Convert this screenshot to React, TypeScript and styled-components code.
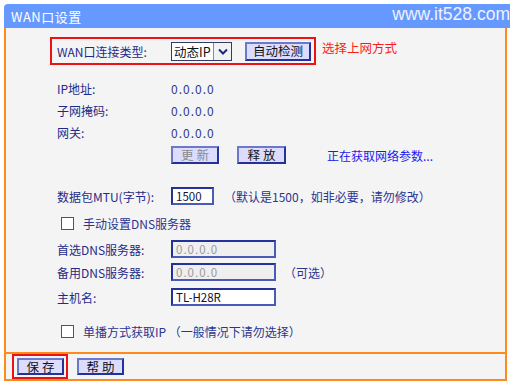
import React from "react";
import styled, { createGlobalStyle } from "styled-components";

const Global = createGlobalStyle`
  body {
    margin: 0;
    background: #ffffff;
    font-family: "Noto Sans CJK SC", "Liberation Sans", sans-serif;
    font-size: 12px;
  }
`;

const Panel = styled.div`
  margin: 4px 0 0 4px;
  width: 506px;
`;

const TitleBar = styled.div`
  height: 24px;
  background: #6699ff;
  border-top-left-radius: 4px;
  display: flex;
  align-items: center;
  justify-content: space-between;
  padding-left: 7px;
  color: #ffffff;
`;

const Title = styled.span`
  font-size: 13px;
  letter-spacing: 0.5px;
`;

const Site = styled.span`
  font-family: "Liberation Sans", sans-serif;
  font-size: 17.5px;
  color: #eef2ff;
  margin-top: -3px;
`;

const Body = styled.div`
  width: 503px;
  box-sizing: border-box;
  background: #f4f4f4;
  border: 2px solid #ff8a1c;
  border-top: none;
  display: flex;
  flex-direction: column;
`;

const RedBox = styled.div<{ $ml: number; $mt?: number }>`
  border: 2px solid #ee1111;
  box-sizing: border-box;
  margin-left: ${(p) => p.$ml}px;
  margin-top: ${(p) => p.$mt ?? 0}px;
  display: flex;
  align-items: center;
`;

const TypeBox = styled(RedBox)`
  width: 266px;
  height: 28px;
  padding-left: 5px;
`;

const Row = styled.div<{ $mt?: number; $h?: number }>`
  display: flex;
  align-items: center;
  height: ${(p) => p.$h ?? 22}px;
  margin-top: ${(p) => p.$mt ?? 0}px;
  padding-left: 51px;
`;

const Label = styled.span`
  width: 114px;
  flex-shrink: 0;
  color: #1f2b88;
`;

const Value = styled.span`
  color: #2f3a90;
  letter-spacing: 1px;
`;

const Note = styled.span<{ $color?: string; $ml?: number }>`
  color: ${(p) => p.$color ?? "#2a3590"};
  margin-left: ${(p) => p.$ml ?? 0}px;
  white-space: nowrap;
`;

const Select = styled.div`
  width: 61px;
  height: 19px;
  box-sizing: border-box;
  border: 1px solid #333a66;
  background: #ffffff;
  display: flex;
  align-items: center;
  justify-content: space-between;
  padding-left: 2px;
  color: #111111;
  font-size: 12.5px;
`;

const SelectArrow = styled.span`
  width: 18px;
  height: 17px;
  box-sizing: border-box;
  border-left: 1px solid #8a8a8a;
  background: #f2f2f2;
  display: flex;
  align-items: center;
  justify-content: center;
`;

const Button = styled.button<{ $w: number; $disabled?: boolean }>`
  width: ${(p) => p.$w}px;
  height: 18px;
  box-sizing: border-box;
  padding: 0;
  background: #dcdcff;
  border: 2px solid;
  border-color: #6a79c9 #23329a #23329a #6a79c9;
  color: ${(p) => (p.$disabled ? "#8a8a8a" : "#111111")};
  font-family: inherit;
  font-size: 12.5px;
  line-height: 14px;
  letter-spacing: 3px;
  text-indent: 3px;
`;

const Input = styled.div<{ $w: number; $disabled?: boolean }>`
  width: ${(p) => p.$w}px;
  height: 18px;
  box-sizing: border-box;
  border: 2px solid;
  border-color: #23329a #4a5ab8 #4a5ab8 #23329a;
  background: ${(p) => (p.$disabled ? "#efefef" : "#ffffff")};
  color: ${(p) => (p.$disabled ? "#9a9a9a" : "#111133")};
  padding-left: 3px;
  display: flex;
  align-items: center;
  font-size: 11.5px;
  letter-spacing: ${(p) => (p.$disabled ? "1px" : "0")};
`;

const Check = styled.span`
  width: 13px;
  height: 13px;
  box-sizing: border-box;
  border: 1px solid #555555;
  background: #ffffff;
  margin-left: 4px;
  margin-right: 9px;
  flex-shrink: 0;
`;

const Footer = styled.div`
  margin-top: 10px;
  border-top: 2px solid #ff8a1c;
  height: 25px;
  display: flex;
  align-items: center;
  gap: 9px;
`;

const SaveBox = styled(RedBox)`
  height: 25px;
  padding: 0 2px 0 3px;
`;

export default function App() {
  return (
    <>
      <Global />
      <Panel>
        <TitleBar>
          <Title>WAN口设置</Title>
          <Site>www.it528.com</Site>
        </TitleBar>
        <Body>
          <Row $mt={9} $h={28} style={{ paddingLeft: 44 }}>
            <TypeBox $ml={0}>
              <Label style={{ width: 114 }}>WAN口连接类型:</Label>
              <Select>
                动态IP
                <SelectArrow>
                  <svg width="10" height="7" viewBox="0 0 10 7">
                    <path d="M1 1.5 L5 5.5 L9 1.5" stroke="#1a2a80" strokeWidth="2" fill="none" />
                  </svg>
                </SelectArrow>
              </Select>
              <Button $w={66} style={{ marginLeft: 13, height: 19, letterSpacing: 0, textIndent: 0 }}>
                自动检测
              </Button>
            </TypeBox>
            <Note $color="#ff1a1a" $ml={6} style={{ fontSize: 12.5, marginTop: -8 }}>
              选择上网方式
            </Note>
          </Row>
          <Row $mt={12}>
            <Label>IP地址:</Label>
            <Value>0.0.0.0</Value>
          </Row>
          <Row>
            <Label>子网掩码:</Label>
            <Value>0.0.0.0</Value>
          </Row>
          <Row>
            <Label>网关:</Label>
            <Value>0.0.0.0</Value>
          </Row>
          <Row $mt={2} $h={20}>
            <Label />
            <Button $w={48} $disabled>
              更新
            </Button>
            <Button $w={49} style={{ marginLeft: 18 }}>
              释放
            </Button>
            <Note $color="#1a1aee" $ml={41}>
              正在获取网络参数...
            </Note>
          </Row>
          <Row $mt={20}>
            <Label>数据包MTU(字节):</Label>
            <Input $w={43}>1500</Input>
            <Note $ml={10}>（默认是1500，如非必要，请勿修改）</Note>
          </Row>
          <Row $mt={5}>
            <Check />
            <Note>手动设置DNS服务器</Note>
          </Row>
          <Row $mt={4}>
            <Label>首选DNS服务器:</Label>
            <Input $w={105} $disabled>
              0.0.0.0
            </Input>
          </Row>
          <Row $mt={1}>
            <Label>备用DNS服务器:</Label>
            <Input $w={105} $disabled>
              0.0.0.0
            </Input>
            <Note $ml={8}>（可选）</Note>
          </Row>
          <Row $mt={3}>
            <Label>主机名:</Label>
            <Input $w={105}>TL-H28R</Input>
          </Row>
          <Row $mt={12}>
            <Check />
            <Note>单播方式获取IP （一般情况下请勿选择）</Note>
          </Row>
          <Footer>
            <SaveBox $ml={6}>
              <Button $w={47} style={{ height: 17 }}>
                保存
              </Button>
            </SaveBox>
            <Button $w={47} style={{ height: 17 }}>
              帮助
            </Button>
          </Footer>
        </Body>
      </Panel>
    </>
  );
}
